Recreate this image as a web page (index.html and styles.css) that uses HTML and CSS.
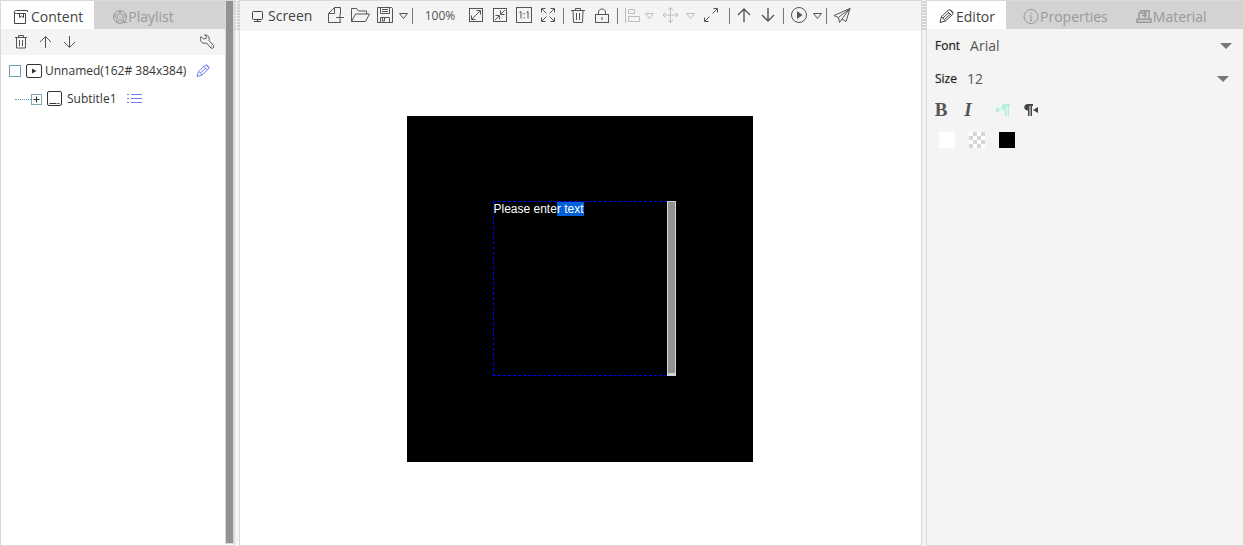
FILE: index.html
```html
<!DOCTYPE html>
<html lang="en">
<head>
<meta charset="utf-8">
<title>Screen editor</title>
<link rel="stylesheet" href="styles.css">
</head>
<body>
<div class="app">
  <aside class="panel content-panel">
    <div class="content-body">
      <nav class="tabs" role="tablist" aria-label="Content">
        <button class="tab active" role="tab" aria-selected="true"><svg class="icon small" viewBox="0 0 16 16"><path d="M3.500 1.500h11M3.500 1.500c-3 0-3 3 0 3h9V14.500H1.500V3M14.500 1.500V3M6.500 4.500v4l2-1.500 2 1.500v-4"/></svg>Content</button>
        <button class="tab" role="tab" aria-selected="false"><svg class="icon small" viewBox="0 0 16 16"><circle cx="8" cy="8" r="6.500"/><circle cx="8" cy="4" r="1.500"/><circle cx="4.200" cy="7" r="1.500"/><circle cx="11.800" cy="7" r="1.500"/><circle cx="5.700" cy="11.300" r="1.500"/><circle cx="10.300" cy="11.300" r="1.500"/><path d="M7.500 8h1M12 13.500h3"/></svg>Playlist</button>
      </nav>
      <div class="tree-tools">
        <button class="tool" aria-label="Delete"><svg class="icon small" viewBox="0 0 16 16"><path d="M2 3.500h12M5.500 3v-1.500h5V3M3.500 4v10h9V4M6.500 6v6M9.500 6v6"/></svg></button>
        <button class="tool" aria-label="Move up"><svg class="icon small" viewBox="0 0 16 16"><path d="M8.500 14V3M3 8 8.500 2.500 14 8"/></svg></button>
        <button class="tool" aria-label="Move down"><svg class="icon small" viewBox="0 0 16 16"><path d="M8.500 2v11M3 8 8.500 13.500 14 8"/></svg></button>
        <button class="tool settings" aria-label="Settings"><svg class="icon small" viewBox="0 0 16 16"><path d="M2 2.500 4.500 5l2.500-.5.500-2L5.500 1C8.500.5 11 3 10 6.500l4.500 5c1 2-1 3.500-2.500 2.500L7.500 9C4 10 1 8 1.500 4.500z"/><path d="M12 12h.5"/></svg></button>
      </div>
      <ul class="tree">
        <li class="row">
          <input class="check" type="checkbox" id="unnamed">
          <svg class="icon screen" viewBox="0 0 18 16"><rect x="1.500" y="1.500" width="15" height="13" rx="1.500"/><path class="solid" d="M7 5.500v5L11.500 8z"/></svg>
          <label for="unnamed">Unnamed(162# 384x384)</label>
          <button class="link edit" aria-label="Rename"><svg class="icon small violet" viewBox="0 0 16 16"><path d="M2 13.500l1.500-5L10 2.500c2-1.500 5 1 3.500 3.500L7 12zM9 3.500 12.500 7M4 8.500 7.500 12M5.500 10 11 5M11.500 2.500l2 2"/></svg></button>
        </li>
        <li class="row child">
          <span class="branch"></span>
          <button class="expand" aria-label="Expand"><svg class="icon tiny" viewBox="0 0 11 11"><rect x=".5" y=".5" width="10" height="10" stroke="#7fa6b2"/><path d="M2.500 5.500h6M5.500 2.500v6"/></svg></button>
          <svg class="icon small" viewBox="0 0 16 16"><rect x="1.500" y=".5" width="14" height="14" rx="1.500"/><path d="M3.500 12.500h7M11.500 12.500h2"/></svg>
          <span>Subtitle1</span>
          <button class="link" aria-label="List options"><svg class="icon small violet" viewBox="0 0 16 16"><path d="M1 3.500h2M5 3.500h11M1 7.500h2M5 7.500h11M1 11.500h2M5 11.500h11"/></svg></button>
        </li>
      </ul>
    </div>
    <div class="scrollbar"></div>
  </aside>
  <div class="splitter"></div>
  <main class="panel stage-panel">
    <header class="toolbar">
      <button class="screen-button"><svg class="icon mini" viewBox="0 0 13 13"><rect x="1.500" y="1.500" width="10" height="8" rx="1"/><path d="M6.500 9.500v2M3 11.500h7"/></svg>Screen</button>
      <button class="tool" aria-label="New"><svg class="icon" viewBox="0 0 18 18"><path d="M7.500 .5h6V7M13.500 14v1.500h-12v-9h6v-6M1.500 6.500l6-6M9 10.500h8M13 6.500v8"/></svg></button>
      <button class="tool" aria-label="Open"><svg class="icon wide" viewBox="0 0 20 18"><path d="M1.500 14.500v-13h5l2 2.500h8v3M1.500 14.500l4-7.500h14l-4 7.500z"/></svg></button>
      <button class="tool roomy" aria-label="Save"><svg class="icon" viewBox="0 0 18 18"><path d="M1.500 .5h14l1 1v14h-15zM4.500 .5v6h9v-6M6 2.500h6M6 4.500h6M4.500 15.500v-5h9v5M6.500 11v3h2v-3"/></svg></button>
      <button class="drop" aria-label="Save options"><svg class="icon caret" viewBox="0 0 10 8"><path d="M1.500 1.500h8L5.500 6.500z"/></svg></button>
      <span class="separator"></span>
      <span class="zoom">100%</span>
      <button class="tool" aria-label="Zoom in"><svg class="icon small" viewBox="0 0 16 16"><rect x="1.500" y=".5" width="13" height="13"/><path d="M4 11 12 3M8.500 2.500h4v4M3.500 7.500v4h4"/></svg></button>
      <button class="tool" aria-label="Zoom out"><svg class="icon small" viewBox="0 0 16 16"><rect x="1.500" y=".5" width="13" height="13"/><path d="M13 2 9 6M8.500 2.500v4h4M3 12l4-4M3.500 7.500h4v4"/></svg></button>
      <button class="tool" aria-label="Actual size"><svg class="icon" viewBox="0 0 18 18"><rect x="1.500" y=".5" width="15" height="15"/><path d="M4.500 5.500l1.500-1v7M11.500 5.500l1.500-1v7M9 6v1.500M9 10v1.500"/></svg></button>
      <button class="tool" aria-label="Fit"><svg class="icon small" viewBox="0 0 16 16"><path d="M1.500 4.500v-4h4M10.500 .5h4v4M14.500 9.500v4h-4M5.500 13.500h-4v-4M2 1l4.500 4.500M14 1 9.500 5.500M2 13l4.500-4.500M14 13 9.500 8.500"/></svg></button>
      <span class="separator narrow"></span>
      <button class="tool" aria-label="Delete item"><svg class="icon" viewBox="0 0 18 18"><path d="M2 3.500h14M6.500 3V1.500h5V3M4 4l.5 11.500h9L14 4M7.500 6v7M10.500 6v7"/></svg></button>
      <button class="tool" aria-label="Lock"><svg class="icon" viewBox="0 0 18 18"><rect x="2.500" y="7.500" width="13" height="8"/><path d="M5.500 7V5c0-4 7-4 7 0v2M9 10v3"/></svg></button>
      <span class="separator narrow"></span>
      <button class="tool muted" aria-label="Align"><svg class="icon small" viewBox="0 0 16 16"><path d="M1.500 0v15M4.500 1.500h6v4h-6zM4.500 8.500h11v5h-11z"/></svg></button>
      <button class="drop muted" aria-label="Align options"><svg class="icon caret" viewBox="0 0 10 8"><path d="M1.500 1.500h8L5.500 6.500z"/></svg></button>
      <button class="tool broad muted" aria-label="Move"><svg class="icon" viewBox="0 0 18 18"><path d="M9.500 .5v15M2 8h15M7 3 9.500 .5 12 3M7 13 9.500 15.500 12 13M4.500 5.500 2 8 4.500 10.500M14.500 5.500 17 8 14.500 10.500"/></svg></button>
      <button class="drop muted" aria-label="Move options"><svg class="icon caret" viewBox="0 0 10 8"><path d="M1.500 1.500h8L5.500 6.500z"/></svg></button>
      <button class="tool broad" aria-label="Resize"><svg class="icon small" viewBox="0 0 16 16"><path d="M10.500 .5h4v4M14 1 9.500 5.500M1.500 9.500v4h4M2 13l4.500-4.500"/></svg></button>
      <span class="separator narrow"></span>
      <button class="tool" aria-label="Bring forward"><svg class="icon strong" viewBox="0 0 18 18"><path d="M9 15V3M3 8 9 2 15 8"/></svg></button>
      <button class="tool" aria-label="Send backward"><svg class="icon strong" viewBox="0 0 18 18"><path d="M9 1v12M3 8 9 14 15 8"/></svg></button>
      <span class="separator narrow"></span>
      <button class="tool roomy" aria-label="Preview"><svg class="icon" viewBox="0 0 18 18"><circle cx="9" cy="8" r="7.500"/><path class="solid" d="M7 4v8l5.500-4z"/></svg></button>
      <button class="drop" aria-label="Preview options"><svg class="icon caret" viewBox="0 0 10 8"><path d="M1.500 1.500h8L5.500 6.500z"/></svg></button>
      <span class="separator"></span>
      <button class="tool" aria-label="Send"><svg class="icon" viewBox="0 0 18 18"><path d="M1 8.500 17 1.500 13 14.500l-4-2.500-2.500 3.500L5.500 10.500zM17 1.500 5.500 10.500M17 1.500 9 12"/></svg></button>
    </header>
    <section class="workspace">
      <div class="canvas">
        <div class="subtitle">
          <div class="subtitle-text" role="textbox" contenteditable="true" aria-label="Subtitle text" spellcheck="false">Please ente<mark>r text</mark></div>
          <div class="subtitle-scroll"></div>
        </div>
      </div>
    </section>
  </main>
  <div class="splitter solid-bars"></div>
  <aside class="panel editor-panel">
    <nav class="tabs" role="tablist" aria-label="Inspector">
      <button class="tab active" role="tab" aria-selected="true"><svg class="icon small" viewBox="0 0 16 16"><path d="M1 13.500l1.500-6L9 1.500c2-2 6 1 4.500 4L6.500 12zM8.500 2.500l4 4M2.500 7.500 6.500 12M4 9 10 3.500M5.500 10.500 11.500 5M11 1l3 3"/></svg>Editor</button>
      <button class="tab" role="tab" aria-selected="false"><svg class="icon small" viewBox="0 0 16 16"><circle cx="8" cy="7.500" r="7"/><path d="M8 6.500v5M8 3.500v1.500M7 6.500h1M7 11.500h2"/></svg>Properties</button>
      <button class="tab" role="tab" aria-selected="false"><svg class="icon small" viewBox="0 0 16 16"><path stroke-width="1.500" d="M1 13.200h14v-3H1zM3 10V4h2V1.700h8V10M6 4h5M6 6.500h5M9 2v7"/></svg>Material</button>
    </nav>
    <form class="settings-form">
      <div class="field"><label for="font">Font</label><span class="select"><select id="font"><option>Arial</option></select></span></div>
      <div class="field size"><label for="size">Size</label><span class="select"><select id="size"><option>12</option></select></span></div>
      <div class="styles">
        <button type="button" class="letter">B</button>
        <button type="button" class="letter italic">I</button>
        <button type="button" class="paragraph on" aria-label="Left to right"><svg class="icon small" viewBox="0 0 16 16"><path class="solid" d="M1 5v6l5-3zM15 2v2h-1v10h-1.500V4h-1v10H10V8.500C5 8.500 5 2 10 2z"/></svg></button>
        <button type="button" class="paragraph" aria-label="Right to left"><svg class="icon small" viewBox="0 0 16 16"><path class="solid" d="M15 5v6l-5-3zM10 2v2H9v10H7.500V4h-1v10H5V8.500C0 8.500 0 2 5 2z"/></svg></button>
      </div>
      <div class="swatches">
        <button type="button" class="swatch white" aria-label="Text color"></button>
        <button type="button" class="swatch clear" aria-label="Background color"></button>
        <button type="button" class="swatch black" aria-label="Canvas color"></button>
      </div>
    </form>
  </aside>
</div>
</body>
</html>
```

FILE: styles.css
```css
* { box-sizing: border-box; }
body {
  margin: 0;
  background: #f4f4f4;
  color: #333;
  font: 14px/20px "Open Sans", "Noto Sans", sans-serif;
}
button {
  display: flex;
  align-items: center;
  justify-content: center;
  margin: 0;
  padding: 0;
  border: 0;
  background: none;
  color: inherit;
  font: inherit;
}
.app {
  display: grid;
  grid-template-columns: 235px 4px minmax(0, 1fr) 4px 318px;
  height: 100vh;
}
.panel { min-width: 0; border: 1px solid #d9d9d9; }

.icon {
  flex: none;
  width: 18px;
  height: 18px;
  fill: none;
  stroke: currentColor;
  stroke-width: 1;
}
.icon.small { width: 16px; height: 16px; }
.icon.wide { width: 20px; }
.icon.screen { width: 18px; height: 16px; }
.icon.mini { width: 13px; height: 13px; }
.icon.tiny { width: 11px; height: 11px; }
.icon.caret { width: 10px; height: 8px; }
.icon.strong { stroke-width: 1.4; }
.icon.violet { color: #6f7cf0; }
.icon .solid { fill: currentColor; stroke: none; }

.tabs { display: flex; height: 28px; background: #d3d3d3; }
.tab { gap: 1px; padding: 4px 11px 0 12px; color: #999; }
.tab.active { background: #fff; color: #444; }

.content-panel { display: flex; background: #fff; }
.content-body { flex: 1; min-width: 0; }
.content-panel .tab.active { gap: 2px; }
.content-panel .tab + .tab { padding-left: 18px; gap: 0; }
.tree-tools {
  display: flex;
  align-items: center;
  height: 26px;
  padding: 0 6px 0 8px;
  background: #f4f4f4;
  color: #555;
}
.tool { width: 24px; height: 28px; }
.tool.roomy { width: 26px; }
.tool.broad { width: 31px; }
.settings { margin-left: auto; }
.scrollbar {
  width: 9px;
  margin-bottom: 1px;
  border: 1px solid #d9d9d9;
  border-top: 0;
  background: #929292;
}
.tree { margin: 0; padding: 2px 0 0 8px; list-style: none; font-size: 12px; }
.row { display: flex; align-items: center; height: 28px; }
.check {
  appearance: none;
  width: 12px;
  height: 12px;
  margin: 0 4px 0 0;
  border: 1px solid #6d9fb0;
  background: #fff;
}
.row label { margin-left: 2px; }
.edit { margin-left: 9px; }
.child { gap: 4px; padding-left: 6px; }
.child span:not(.branch) { margin-left: 1px; }
.branch { width: 16px; margin-right: -4px; border-top: 1px dotted #4a9ec4; }
.child .link { margin-left: 5px; }

.splitter {
  height: 30px;
  background:
    linear-gradient(90deg, transparent 1px, #f4f4f4 1px 2px, transparent 2px),
    repeating-linear-gradient(#f4f4f4 0 1px, #cfcfcf 1px 3px);
}
.splitter.solid-bars { background: repeating-linear-gradient(#f4f4f4 0 1px, #d3d3d3 1px 3px); }

.stage-panel { display: flex; flex-direction: column; background: #fff; }
.toolbar {
  display: flex;
  align-items: center;
  height: 30px;
  padding-left: 11px;
  background: #f4f4f4;
  color: #555;
}
.screen-button { justify-content: flex-start; gap: 4px; width: 73px; color: #444; }
.drop { width: 10px; height: 28px; }
.muted { color: #bdbdbd; }
.separator { flex: none; display: flex; justify-content: center; width: 8px; }
.separator.narrow { width: 6px; }
.separator::before { content: ""; width: 1px; height: 16px; background: #777; }
.zoom { width: 48px; font-size: 12px; text-align: center; }
.workspace {
  flex: 1;
  display: flex;
  align-items: center;
  justify-content: center;
  padding: 2px 2px 0 0;
}
.canvas { position: relative; width: 346px; height: 346px; background: #000; }
.subtitle {
  position: absolute;
  top: 85px;
  left: 86px;
  display: flex;
  width: 183px;
  height: 175px;
}
.subtitle-text {
  flex: 1;
  border: 1px dashed #00f;
  border-right: 0;
  outline: 0;
  color: #fff;
  font: 12px/14px "Liberation Sans", Arial, sans-serif;
}
.subtitle-text mark { background: #0060d8; color: #fff; }
.subtitle-scroll { width: 9px; border: 1px solid #d3d3d3; border-bottom-width: 3px; background: #929292; }

.editor-panel { background: #f4f4f4; }
.editor-panel .tab + .tab { padding-left: 17px; }
.settings-form { padding: 0 11px 0 8px; }
.field { display: flex; align-items: center; height: 33px; gap: 10px; }
.field label { font-size: 12px; color: #222; text-shadow: 0 0 1px #999; }
.field.size { padding-right: 3px; }
.select { flex: 1; display: flex; align-items: center; }
.select::after {
  content: "";
  border: 6px solid transparent;
  border-top-color: #777;
  border-bottom: 0;
}
.select select {
  flex: 1;
  appearance: none;
  padding: 0;
  border: 0;
  background: none;
  color: #555;
  font: inherit;
}
.styles { display: flex; height: 30px; align-items: center; }
.letter { width: 12px; margin-right: 15px; color: #555; font: bold 19px/24px "Liberation Serif", serif; }
.italic { font-style: italic; margin-right: 15px; }
.paragraph { width: 28px; color: #444; }
.on { color: #b1f1d7; }
.swatches { display: flex; gap: 14px; padding: 7px 4px; }
.swatch { width: 16px; height: 16px; }
.white { background: #fff; }
.black { background: #000; }
.clear { background: repeating-conic-gradient(#d6d6d6 0 25%, #fff 0 50%) 0 0 / 8px 8px; }
```
